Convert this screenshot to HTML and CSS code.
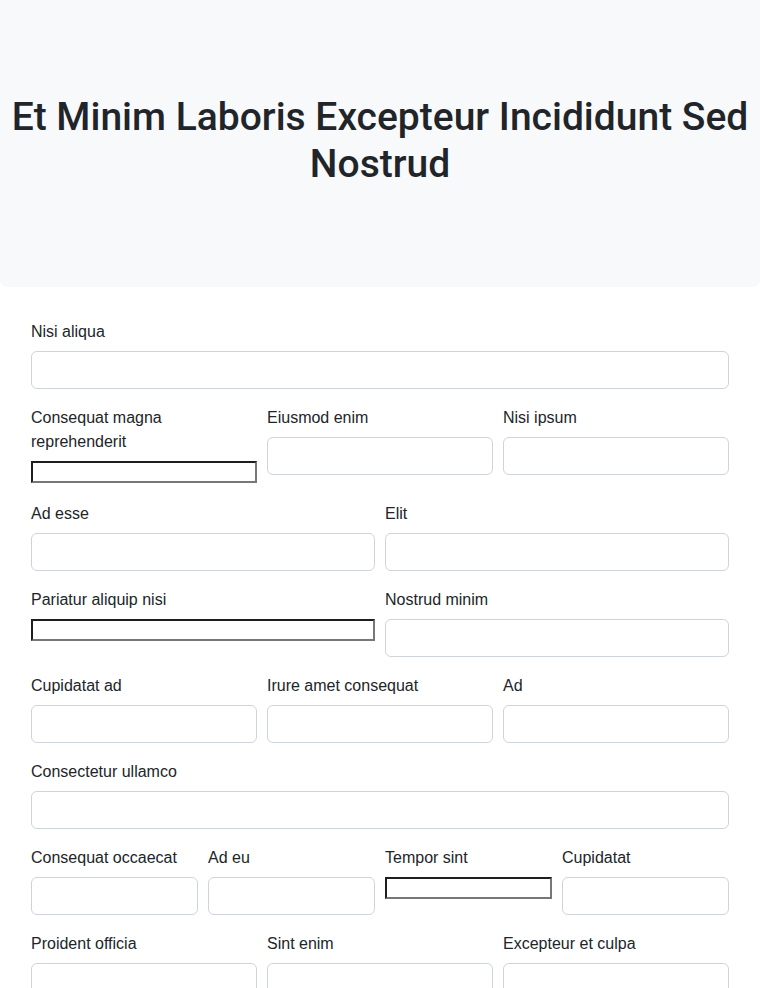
FILE: index.html
```html
<!DOCTYPE html>
<html lang="en">
<head>
<meta charset="utf-8">
<title>Form</title>
<link rel="stylesheet" href="styles.css">
</head>
<body>
<header class="hero">
  <h1 class="hero-title">Et Minim Laboris Excepteur Incididunt Sed Nostrud</h1>
</header>
<form class="form">
  <div class="row">
    <div class="field"><label class="label">Nisi aliqua</label><input class="control" type="text"></div>
  </div>
  <div class="row cols-3">
    <div class="field"><label class="label">Consequat magna reprehenderit</label><input class="raw" type="text"></div>
    <div class="field"><label class="label">Eiusmod enim</label><input class="control" type="text"></div>
    <div class="field"><label class="label">Nisi ipsum</label><input class="control" type="text"></div>
  </div>
  <div class="row cols-2">
    <div class="field"><label class="label">Ad esse</label><input class="control" type="text"></div>
    <div class="field"><label class="label">Elit</label><input class="control" type="text"></div>
  </div>
  <div class="row cols-2">
    <div class="field"><label class="label">Pariatur aliquip nisi</label><input class="raw" type="text"></div>
    <div class="field"><label class="label">Nostrud minim</label><input class="control" type="text"></div>
  </div>
  <div class="row cols-3">
    <div class="field"><label class="label">Cupidatat ad</label><input class="control" type="text"></div>
    <div class="field"><label class="label">Irure amet consequat</label><input class="control" type="text"></div>
    <div class="field"><label class="label">Ad</label><input class="control" type="text"></div>
  </div>
  <div class="row">
    <div class="field"><label class="label">Consectetur ullamco</label><input class="control" type="text"></div>
  </div>
  <div class="row cols-4">
    <div class="field"><label class="label">Consequat occaecat</label><input class="control" type="text"></div>
    <div class="field"><label class="label">Ad eu</label><input class="control" type="text"></div>
    <div class="field"><label class="label">Tempor sint</label><input class="raw" type="text"></div>
    <div class="field"><label class="label">Cupidatat</label><input class="control" type="text"></div>
  </div>
  <div class="row cols-3">
    <div class="field"><label class="label">Proident officia</label><input class="control" type="text"></div>
    <div class="field"><label class="label">Sint enim</label><input class="control" type="text"></div>
    <div class="field"><label class="label">Excepteur et culpa</label><input class="control" type="text"></div>
  </div>
</form>
</body>
</html>
```
FILE: styles.css
```css
* { box-sizing: border-box; }
body {
  margin: 0;
  background: #fff;
  color: #212529;
  font-family: "Liberation Sans", Arial, sans-serif;
  font-size: 16px;
  line-height: 1.5;
}
.hero {
  background: #f8f9fa;
  border-radius: 0 0 8px 8px;
  padding: 94px 8px 99px;
  text-align: center;
}
.hero-title {
  margin: 0;
  font-family: Roboto, "Liberation Sans", sans-serif;
  font-size: 39px;
  font-weight: 500;
  line-height: 47px;
}
.form {
  padding: 32px 31px 0;
}
.row {
  display: grid;
  grid-template-columns: 1fr;
  column-gap: 10px;
  margin-bottom: 16px;
}
.cols-2 { grid-template-columns: repeat(2, 1fr); }
.cols-3 { grid-template-columns: repeat(3, 1fr); }
.cols-4 { grid-template-columns: repeat(4, 1fr); }
.field { display: flex; flex-direction: column; align-items: stretch; min-width: 0; }
.label {
  display: block;
  padding-top: 1px;
  margin-bottom: 7px;
}
.control {
  display: block;
  width: 100%;
  height: 38px;
  padding: 6px 12px;
  font: inherit;
  color: #212529;
  background: #fff;
  border: 1px solid #ced4da;
  border-radius: 6px;
}
.raw {
  display: block;
  width: 100%;
  height: 22px;
  margin: 0 0 2px;
  padding: 1px 2px;
  background: #fff;
  border-style: solid;
  border-width: 2px;
  border-color: #1e1e1e #777 #777 #1e1e1e;
  border-radius: 0;
}
```
